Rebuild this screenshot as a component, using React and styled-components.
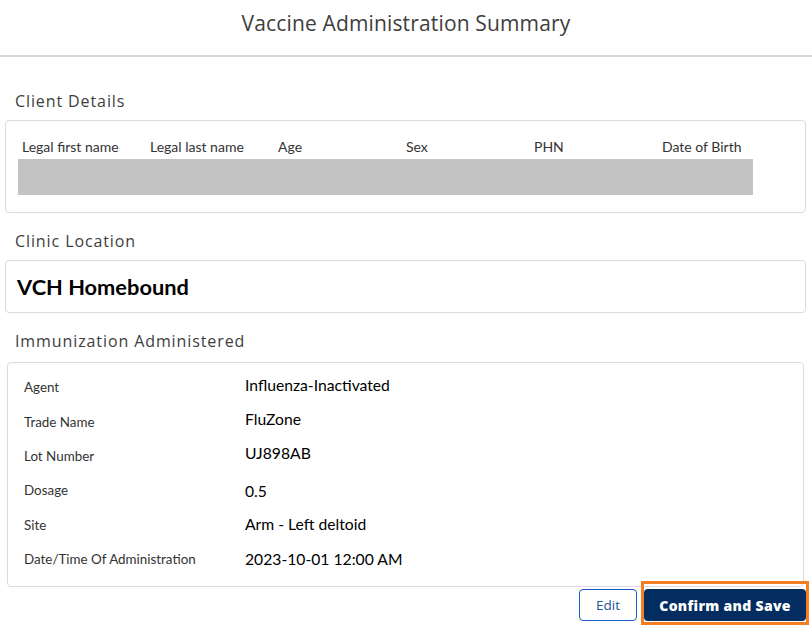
import React from 'react';
import styled, { createGlobalStyle } from 'styled-components';

const GlobalStyle = createGlobalStyle`
  body {
    margin: 0;
    background: #fff;
    font-family: Lato, "Open Sans", sans-serif;
    color: #3e3e3c;
  }
`;

const Page = styled.div`
  width: 812px;
  height: 632px;
  display: flex;
  flex-direction: column;
  overflow: hidden;
`;

const Header = styled.header`
  height: 57px;
  border-bottom: 2px solid #d8d8d8;
  display: flex;
  align-items: center;
  justify-content: center;
  font-family: "Open Sans", sans-serif;
  font-size: 21px;
  letter-spacing: 0.15px;
  color: #3e3e3c;
  padding-bottom: 9px;
  box-sizing: border-box;
`;

const Body = styled.main`
  padding: 0 6px 0 5px;
  display: flex;
  flex-direction: column;
`;

const SectionTitle = styled.h2`
  margin: 0;
  padding-left: 10px;
  height: ${(p) => p.$h || 63}px;
  display: flex;
  align-items: flex-end;
  padding-bottom: ${(p) => p.$pb ?? 8}px;
  box-sizing: border-box;
  font-family: "Open Sans", sans-serif;
  font-weight: 400;
  font-size: 16px;
  letter-spacing: 0.9px;
  color: #3e3e3c;
`;

const Card = styled.section`
  border: 1px solid #dddbda;
  border-radius: 4px;
  margin: 0 ${(p) => p.$inset || 0}px;
  box-sizing: border-box;
`;

const ClientCard = styled(Card)`
  height: 93px;
  padding: 15px 0 0 12px;
`;

const ColumnRow = styled.div`
  display: grid;
  grid-template-columns: repeat(6, 128px);
  height: 23px;
`;

const ColumnLabel = styled.div`
  padding-left: 4px;
  font-size: 14px;
  color: #333;
  line-height: 22px;
  white-space: nowrap;
`;

const RedactedBar = styled.div`
  width: 735px;
  height: 36px;
  background: #c3c3c3;
`;

const LocationCard = styled(Card)`
  height: 53px;
  display: flex;
  align-items: center;
  padding-left: 11px;
  font-size: 21.8px;
  font-weight: 700;
  color: #000;
`;

const ImmunizationCard = styled(Card)`
  height: 225px;
  padding: 7px 0 0 16px;
  display: grid;
  grid-template-columns: 221px 1fr;
  grid-auto-rows: 34.4px;
`;

const FieldLabel = styled.div`
  display: flex;
  align-items: center;
  font-size: 13.4px;
  color: #333;
`;

const FieldValue = styled.div`
  display: flex;
  align-items: center;
  font-size: 15.7px;
  color: #000;
  transform: translateY(${(p) => p.$dy || 0}px);
`;

const Actions = styled.div`
  display: flex;
  justify-content: flex-end;
  align-items: flex-end;
  gap: 4px;
  margin-top: -6px;
`;

const EditButton = styled.button`
  width: 58px;
  height: 32px;
  margin-bottom: 4px;
  border: 1px solid #1b5dc9;
  border-radius: 4px;
  background: #fff;
  color: #1b5297;
  font-family: "Open Sans", sans-serif;
  font-size: 13.5px;
  cursor: pointer;
`;

const Highlight = styled.div`
  border: 3px solid #f47f20;
  padding: 5px 0 1px 0;
  display: flex;
  margin-right: -3px;
`;

const PrimaryButton = styled.button`
  width: 162px;
  height: 32px;
  border: none;
  border-radius: 4px;
  background: #032d60;
  color: #fff;
  font-family: "Open Sans", sans-serif;
  font-weight: 800;
  font-size: 14px;
  letter-spacing: 0.3px;
  cursor: pointer;
`;

const columns = ['Legal first name', 'Legal last name', 'Age', 'Sex', 'PHN', 'Date of Birth'];

const fields = [
  ['Agent', 'Influenza-Inactivated', -2],
  ['Trade Name', 'FluZone', -3],
  ['Lot Number', 'UJ898AB', -3],
  ['Dosage', '0.5', 1],
  ['Site', 'Arm - Left deltoid', -1],
  ['Date/Time Of Administration', '2023-10-01 12:00 AM', 0],
];

export default function App() {
  return (
    <>
      <GlobalStyle />
      <Page>
        <Header>Vaccine Administration Summary</Header>
        <Body>
          <SectionTitle>Client Details</SectionTitle>
          <ClientCard>
            <ColumnRow>
              {columns.map((c) => (
                <ColumnLabel key={c}>{c}</ColumnLabel>
              ))}
            </ColumnRow>
            <RedactedBar />
          </ClientCard>

          <SectionTitle $h={47}>Clinic Location</SectionTitle>
          <LocationCard>VCH Homebound</LocationCard>

          <SectionTitle $h={49} $pb={10}>Immunization Administered</SectionTitle>
          <ImmunizationCard $inset={2}>
            {fields.map(([label, value, dy]) => (
              <React.Fragment key={label}>
                <FieldLabel>{label}</FieldLabel>
                <FieldValue $dy={dy}>{value}</FieldValue>
              </React.Fragment>
            ))}
          </ImmunizationCard>

          <Actions>
            <EditButton>Edit</EditButton>
            <Highlight>
              <PrimaryButton>Confirm and Save</PrimaryButton>
            </Highlight>
          </Actions>
        </Body>
      </Page>
    </>
  );
}
